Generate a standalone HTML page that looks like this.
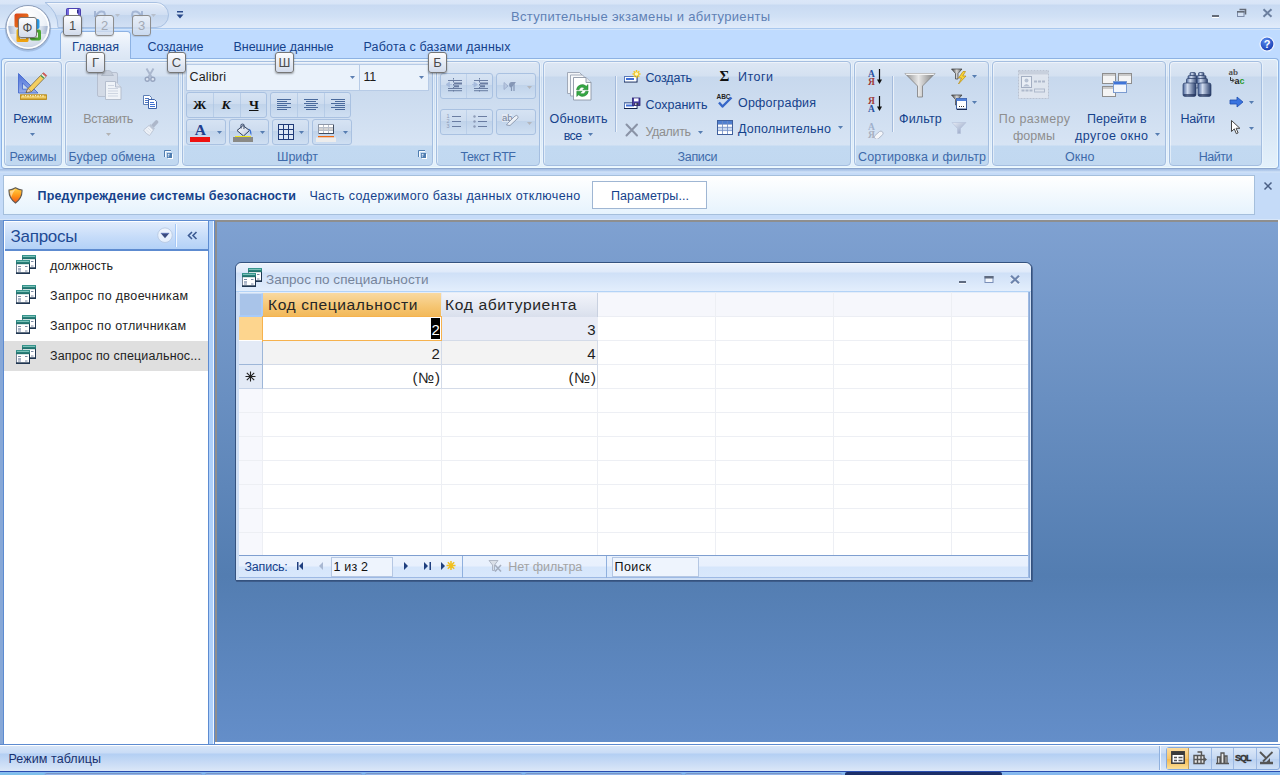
<!DOCTYPE html>
<html lang="ru"><head><meta charset="utf-8"><title>Вступительные экзамены и абитуриенты</title>
<style>
html,body{margin:0;padding:0;}
body{width:1280px;height:775px;overflow:hidden;position:relative;background:#bfdbff;font-family:"Liberation Sans",sans-serif;font-size:12.5px;color:#15428b;}
div,span,svg{position:absolute;box-sizing:border-box;}
.t{white-space:nowrap;}
.grp{top:61px;height:105px;border:1px solid #a4bee0;border-radius:4px;background:linear-gradient(#dde7f4 0,#d4e1f1 14px,#c7d8ed 15px,#d7e4f4 83px,#c2d9f1 84px,#c1d8f0 100%);box-shadow:inset 1px 1px 0 rgba(255,255,255,.5), 0 0 0 1px rgba(240,248,255,.6);}
.kt{width:19px;height:21px;border:1px solid #767676;border-radius:3px;background:linear-gradient(#fdfdfe,#d2dbeb);box-shadow:0 1px 2px rgba(0,0,0,.35);font-size:13px;color:#4b4b4b;text-align:center;line-height:19px;}
.kt.dis{border-color:#8e8e8e;background:linear-gradient(rgba(240,244,250,.8),rgba(205,217,235,.8));color:#a3a9b5;box-shadow:0 1px 1px rgba(0,0,0,.12)}
.bg{border:1px solid #a9c1e1;border-radius:3px;background:linear-gradient(#d6e3f3 0,#cddcef 45%,#c0d3ea 46%,#cfdff2 100%);}
.sep{width:1px;background:#a9c1e1;}
.gl{white-space:nowrap;color:#3e6aaa;}
</style></head><body>
<svg style="left:0;top:0" width="0" height="0"><defs><linearGradient id="qh" x1="0" y1="0" x2="0" y2="1"><stop offset="0" stop-color="#3a9a92"/><stop offset="1" stop-color="#1d6b67"/></linearGradient></defs></svg>
<div style="left:0;top:0;width:1280px;height:30px;background:linear-gradient(#dbe7f8 0,#d8e5f7 4px,#c8daf2 5px,#d0e0f5 16px,#e0ebfa 27.500px,#a9c8ee 28px,#a9c8ee 29px,#d3e5fb 29px)"></div><svg style="left:40px;top:0" width="135" height="30" viewBox="0 0 135 30"><defs><linearGradient id="qp" x1="0" y1="0" x2="0" y2="1"><stop offset="0" stop-color="#e4ecf8"/><stop offset=".5" stop-color="#d0def2"/><stop offset=".52" stop-color="#c4d6ee"/><stop offset="1" stop-color="#d2e0f4"/></linearGradient></defs><path d="M5 2.500 H116 a12.500 12.500 0 0 1 0 25 H18 A30 30 0 0 0 5 2.500Z" fill="url(#qp)" stroke="#a9c1e2" stroke-width="1"/><path d="M8 3.500 H116 a11.500 11.500 0 0 1 8 3.300" fill="none" stroke="#f2f6fc" stroke-width="1"/></svg><span class="t" style="left:511px;top:8px;font-size:13px;color:#5f81b5;line-height:17px;letter-spacing:0.32px;">Вступительные экзамены и абитуриенты</span><div style="left:1212px;top:15px;width:7px;height:2px;background:#646b78;box-shadow:0 1px 0 #fff"></div><svg style="left:1236px;top:8px" width="12" height="10" viewBox="0 0 12 10"><path d="M3.5 1.5h6v5" fill="none" stroke="#636a76" stroke-width="1.6"/><rect x="1.5" y="3.5" width="6.5" height="5" fill="#d5e2f4" stroke="#7d8caa" stroke-width="1"/><rect x="1" y="3" width="7.5" height="1.6" fill="#636a76"/></svg><svg style="left:1262px;top:8px" width="12" height="10" viewBox="0 0 12 10"><path d="M1.5 1.2 L9.5 8.8 M9.5 1.2 L1.5 8.8" stroke="#6b7f9f" stroke-width="2"/></svg><div style="left:60px;top:31px;width:71px;height:28px;border:1px solid #8db2e3;border-bottom:none;border-radius:4px 4px 0 0;background:linear-gradient(#f4f8fd,#e3ecf8 60%,#dbe6f4);"></div><span class="t" style="left:72px;top:39px;font-size:12.5px;color:#15428b;line-height:16px;letter-spacing:-0.1px;">Главная</span><span class="t" style="left:147.5px;top:39px;font-size:12.5px;color:#15428b;line-height:16px;letter-spacing:-0.06px;">Создание</span><span class="t" style="left:233.5px;top:39px;font-size:12.5px;color:#15428b;line-height:16px;letter-spacing:-0.04px;">Внешние данные</span><span class="t" style="left:363.5px;top:39px;font-size:12.5px;color:#15428b;line-height:16px;letter-spacing:0.18px;">Работа с базами данных</span><svg style="left:1259px;top:36px" width="16" height="16" viewBox="0 0 16 16"><defs><radialGradient id="hg" cx=".4" cy=".3" r=".8"><stop offset="0" stop-color="#5b8df0"/><stop offset="1" stop-color="#0d2fa8"/></radialGradient></defs><circle cx="8" cy="8" r="7" fill="url(#hg)" stroke="#f4f8ff" stroke-width="1.2"/><text x="8" y="12" font-size="11" font-weight="bold" fill="#fff" text-anchor="middle" font-family="Liberation Sans, sans-serif">?</text></svg><div style="left:1px;top:58px;width:1278px;height:111px;border:1px solid #8db2e3;border-bottom-color:#8da6cd;border-radius:4px;background:linear-gradient(#dee9f6 0,#d7e3f2 17px,#c8d9ee 18px,#e4f1fb 100%);box-shadow:inset 0 0 0 1px rgba(240,252,255,.75)"></div><div style="left:61px;top:58px;width:69px;height:3px;background:#dbe6f4"></div><div style="left:0;top:169px;width:1280px;height:6px;background:linear-gradient(#a3bde3 0,#b9d0f0 2px,#d3e4f8 3px,#c5dbf8 4px)"></div><div class="grp" style="left:4px;width:58px"></div><div class="grp" style="left:65px;width:114px"></div><div class="grp" style="left:182px;width:251px"></div><div class="grp" style="left:436px;width:104px"></div><div class="grp" style="left:543px;width:308px"></div><div class="grp" style="left:854px;width:135px"></div><div class="grp" style="left:992px;width:174px"></div><div class="grp" style="left:1169px;width:93px"></div><span class="t" style="left:9.5px;top:149px;font-size:12.5px;color:#3e6aaa;line-height:17px;letter-spacing:-0.11px;">Режимы</span><span class="t" style="left:68.5px;top:149px;font-size:12.5px;color:#3e6aaa;line-height:17px;letter-spacing:0.14px;">Буфер обмена</span><svg style="left:164px;top:150px" width="10" height="10" viewBox="0 0 10 10"><path d="M.5 7V.5H7" fill="none" stroke="#4f7db0" stroke-width="1"/><path d="M1.500 7V1.500H7" fill="none" stroke="#fff" stroke-width="1" opacity=".85"/><rect x="4" y="4" width="5" height="5" fill="#fff"/><rect x="3" y="3" width="5" height="5" fill="#4f7db0"/><rect x="3.800" y="3.800" width="1.700" height="1.700" fill="#dbe7f5"/><rect x="3.800" y="5.500" width="1.200" height="1.700" fill="#a9c1de"/></svg><span class="t" style="left:277px;top:149px;font-size:12.5px;color:#3e6aaa;line-height:17px;letter-spacing:-0.04px;">Шрифт</span><svg style="left:418px;top:150px" width="10" height="10" viewBox="0 0 10 10"><path d="M.5 7V.5H7" fill="none" stroke="#4f7db0" stroke-width="1"/><path d="M1.500 7V1.500H7" fill="none" stroke="#fff" stroke-width="1" opacity=".85"/><rect x="4" y="4" width="5" height="5" fill="#fff"/><rect x="3" y="3" width="5" height="5" fill="#4f7db0"/><rect x="3.800" y="3.800" width="1.700" height="1.700" fill="#dbe7f5"/><rect x="3.800" y="5.500" width="1.200" height="1.700" fill="#a9c1de"/></svg><span class="t" style="left:460.5px;top:149px;font-size:12.5px;color:#3e6aaa;line-height:17px;letter-spacing:-0.44px;">Текст RTF</span><span class="t" style="left:677.5px;top:149px;font-size:12.5px;color:#3e6aaa;line-height:17px;letter-spacing:-0.3px;">Записи</span><span class="t" style="left:858px;top:149px;font-size:12.5px;color:#3e6aaa;line-height:17px;letter-spacing:0.15px;">Сортировка и фильтр</span><span class="t" style="left:1065px;top:149px;font-size:12.5px;color:#3e6aaa;line-height:17px;letter-spacing:0.15px;">Окно</span><span class="t" style="left:1198.8px;top:149px;font-size:12.5px;color:#3e6aaa;line-height:17px;letter-spacing:-0.49px;">Найти</span><svg style="left:17px;top:70px" width="32" height="32" viewBox="0 0 32 32">
<defs><linearGradient id="tri" x1="0" y1="0" x2="0" y2="1"><stop offset="0" stop-color="#3f65d8"/><stop offset="1" stop-color="#8fa8e8"/></linearGradient>
<linearGradient id="rul" x1="0" y1="0" x2="0" y2="1"><stop offset="0" stop-color="#c8941c"/><stop offset=".5" stop-color="#f6d878"/><stop offset="1" stop-color="#c8941c"/></linearGradient></defs>
<path d="M1.5 3.5 L1.5 23 L21 23 Z M5.5 13 L5.5 19.2 L12 19.2 Z" fill="url(#tri)" fill-rule="evenodd" stroke="#2f55c8" stroke-width=".8" opacity=".9"/>
<path d="M9 22.5 L11 18.5 L25.5 3.5 L29 6.5 L14.5 21.5 Z" fill="#f5cf5e" stroke="#6b5a3a" stroke-width=".7"/>
<path d="M9 22.5 L11 18.5 L14.5 21.5 Z" fill="#f3d9b8" stroke="#6b5a3a" stroke-width=".5"/><path d="M9 22.5l1-.4-.6-.6z" fill="#222"/>
<path d="M23.3 5.8 L26.7 8.8 L29 6.5 L25.5 3.5Z" fill="#e8e4da"/><path d="M23.3 5.8l3.4 3 .8-.8-3.4-3z" fill="#2e8a3c"/><path d="M26.5 2.6 L29.8 5.6 L29 6.5 L25.6 3.5Z" fill="#e05a5a" stroke="#a33" stroke-width=".4"/>
<rect x="3.5" y="24.8" width="26" height="4.6" fill="url(#rul)" stroke="#b8860b" stroke-width=".8"/>
<path d="M6 25v2M8.5 25v1.2M11 25v2M13.500 25v1.200M16 25v2M18.500 25v1.200M21 25v2M23.500 25v1.200M26 25v2" stroke="#fff8d8" stroke-width=".9"/>
</svg><span class="t" style="left:13.3px;top:111px;font-size:12.5px;color:#15428b;line-height:17px;letter-spacing:0.04px;">Режим</span><svg style="left:30.0px;top:132.5px" width="5" height="3" viewBox="0 0 5 3"><path d="M0 0h5 l-2.5 3 z" fill="#567db1"/></svg><svg style="left:96px;top:69px" width="28" height="32" viewBox="0 0 28 32" opacity=".9">
<rect x="1.500" y="3.500" width="20" height="24" rx="1.500" fill="#d3dae6" stroke="#b4bdcd"/>
<path d="M7 4.5 q0-3 4.500-3 q4.500 0 4.500 3 l1.500 2 h-12z" fill="#c2c9d6" stroke="#a9b2c2" stroke-width=".8"/>
<path d="M9.500 12.500h10l5.500 5.500v12.500h-15.500z" fill="#f4f6fa" stroke="#b3bccb"/>
<path d="M19.500 12.500v5.500h5.500" fill="#e2e6ee" stroke="#b3bccb"/>
<path d="M12 19.500h10M12 22h10M12 24.500h10M12 27h10M12 16.500h6" stroke="#cfd5e0" stroke-width="1"/>
</svg><span class="t" style="left:83.3px;top:111px;font-size:12.5px;color:#8e8e8e;line-height:17px;letter-spacing:-0.43px;">Вставить</span><svg style="left:105.5px;top:132.5px" width="5" height="3" viewBox="0 0 5 3"><path d="M0 0h5 l-2.5 3 z" fill="#b3b3b3"/></svg><svg style="left:144px;top:68px" width="12" height="15" viewBox="0 0 12 15" opacity=".85">
<path d="M2.500 .5 L7.800 9.500 M9.500 .5 L4.200 9.500" stroke="#a3b0c8" stroke-width="1.900" fill="none"/>
<circle cx="3.200" cy="11.300" r="2" fill="#dfe6f2" stroke="#8e9cb8" stroke-width="1.400"/><circle cx="8.800" cy="11.300" r="2" fill="#dfe6f2" stroke="#8e9cb8" stroke-width="1.400"/></svg><svg style="left:142px;top:94px" width="16" height="16" viewBox="0 0 16 16">
<path d="M1.500 1.500h6l2 2v7h-8z" fill="#fff" stroke="#5d7fb5"/><path d="M3 4.500h4M3 6.500h5M3 8.500h5" stroke="#4e77c3" stroke-width="1"/>
<path d="M6.500 5.500h6l2 2v7h-8z" fill="#fff" stroke="#3e63a8"/><path d="M8 8.500h4M8 10.500h5M8 12.500h5" stroke="#3d6fd0" stroke-width="1"/></svg><svg style="left:142px;top:120px" width="17" height="17" viewBox="0 0 17 17" opacity=".9">
<path d="M14.500 2 L11 5.800" stroke="#a9b3c6" stroke-width="3.600" stroke-linecap="round"/>
<path d="M8.500 4 L13 8.500 L11.500 10 L7 5.500Z" fill="#b9c2d3"/>
<path d="M7 5.500 L11.500 10 L7.500 15.500 Q4 14 1.500 10 Z" fill="#f1f4f9" stroke="#b4bdcd" stroke-width=".8"/>
<path d="M4 9.500l4 4M6 8l3.500 3.500" stroke="#d5dbe6" stroke-width=".8"/></svg><div style="left:186px;top:64px;width:174px;height:27px;background:#eaf2fb;border:1px solid #b7cbe6;border-right-color:#c5d6ec"></div><div style="left:359px;top:64px;width:70px;height:27px;background:#eaf2fb;border:1px solid #b7cbe6"></div><span class="t" style="left:189.5px;top:69px;font-size:12.5px;color:#1c1c1c;line-height:17px;letter-spacing:0.18px;">Calibri</span><span class="t" style="left:363.6px;top:69px;font-size:12.5px;color:#1c1c1c;line-height:17px;letter-spacing:-0.48px;">11</span><svg style="left:350.0px;top:76.0px" width="5" height="3" viewBox="0 0 5 3"><path d="M0 0h5 l-2.5 3 z" fill="#5c7fb2"/></svg><svg style="left:419.0px;top:76.0px" width="5" height="3" viewBox="0 0 5 3"><path d="M0 0h5 l-2.5 3 z" fill="#5c7fb2"/></svg><div class="bg" style="left:186px;top:92px;width:81px;height:26px"></div><div class="sep" style="left:213px;top:93px;height:24px;opacity:.6"></div><div class="sep" style="left:240px;top:93px;height:24px;opacity:.6"></div><span class="t" style="left:193px;top:96px;font-size:13.5px;color:#111;line-height:18px;letter-spacing:-0.36px;font-weight:bold;font-family:'Liberation Serif', serif;">Ж</span><span class="t" style="left:221.5px;top:96px;font-size:13.5px;color:#111;line-height:18px;letter-spacing:2.34px;font-weight:bold;font-style:italic;font-family:'Liberation Serif', serif;">К</span><span class="t" style="left:249px;top:96px;font-size:13.5px;color:#111;line-height:18px;letter-spacing:-0.42px;font-weight:bold;font-family:'Liberation Serif', serif;text-decoration:underline;">Ч</span><div class="bg" style="left:270px;top:92px;width:81px;height:26px"></div><div class="sep" style="left:297px;top:93px;height:24px;opacity:.6"></div><div class="sep" style="left:324px;top:93px;height:24px;opacity:.6"></div><svg style="left:276px;top:98px" width="16" height="14" viewBox="0 0 16 14"><rect x="1" y="1" width="14" height="1" fill="#4a6a9c"/><rect x="1" y="3" width="10" height="1" fill="#4a6a9c"/><rect x="1" y="5" width="14" height="1" fill="#4a6a9c"/><rect x="1" y="7" width="10" height="1" fill="#4a6a9c"/><rect x="1" y="9" width="14" height="1" fill="#4a6a9c"/><rect x="1" y="11" width="10" height="1" fill="#4a6a9c"/></svg><svg style="left:303px;top:98px" width="16" height="14" viewBox="0 0 16 14"><rect x="1.0" y="1" width="14" height="1" fill="#4a6a9c"/><rect x="3.0" y="3" width="10" height="1" fill="#4a6a9c"/><rect x="1.0" y="5" width="14" height="1" fill="#4a6a9c"/><rect x="3.0" y="7" width="10" height="1" fill="#4a6a9c"/><rect x="1.0" y="9" width="14" height="1" fill="#4a6a9c"/><rect x="3.0" y="11" width="10" height="1" fill="#4a6a9c"/></svg><svg style="left:330px;top:98px" width="16" height="14" viewBox="0 0 16 14"><rect x="1" y="1" width="14" height="1" fill="#4a6a9c"/><rect x="5" y="3" width="10" height="1" fill="#4a6a9c"/><rect x="1" y="5" width="14" height="1" fill="#4a6a9c"/><rect x="5" y="7" width="10" height="1" fill="#4a6a9c"/><rect x="1" y="9" width="14" height="1" fill="#4a6a9c"/><rect x="5" y="11" width="10" height="1" fill="#4a6a9c"/></svg><div class="bg" style="left:186px;top:119px;width:40px;height:26px"></div><span class="t" style="left:194.8px;top:120.5px;font-size:15.5px;color:#1f3f8f;line-height:18px;letter-spacing:1.8px;font-weight:bold;font-family:'Liberation Serif', serif;">A</span><div style="left:190px;top:137px;width:20px;height:5px;background:#ee1111"></div><svg style="left:216.5px;top:131.0px" width="5" height="3" viewBox="0 0 5 3"><path d="M0 0h5 l-2.5 3 z" fill="#567db1"/></svg><div class="bg" style="left:229px;top:119px;width:40px;height:26px"></div><svg style="left:232px;top:122px" width="22" height="16" viewBox="0 0 22 16">
<defs><linearGradient id="bk" x1="0" y1="0" x2="1" y2="1"><stop offset="0" stop-color="#ffffff"/><stop offset="1" stop-color="#b9c6dc"/></linearGradient></defs>
<path d="M5 8.500 L11 3.500 L17.500 8.500 L11.500 14 Z" fill="url(#bk)" stroke="#2f3f5c" stroke-width="1"/>
<path d="M9.300 6.500 Q8 2 10.500 2 Q13 2 11.800 7" fill="none" stroke="#4a5a78" stroke-width="1.100"/>
<path d="M16.500 6.500 Q20 7 19.300 13.500 Q17.500 11.500 17.800 9 Z" fill="#3a6fd0"/>
</svg><div style="left:233px;top:137px;width:20px;height:5px;background:#8a8a86"></div><div style="left:235px;top:136px;width:16px;height:1px;background:#f0e818"></div><svg style="left:260.0px;top:131.0px" width="5" height="3" viewBox="0 0 5 3"><path d="M0 0h5 l-2.5 3 z" fill="#567db1"/></svg><div class="bg" style="left:272px;top:119px;width:37px;height:26px"></div><svg style="left:278px;top:124px" width="16" height="16" viewBox="0 0 16 16"><rect x="0" y="0" width="16" height="16" fill="#dde7f5"/><path d="M.5 0v16M5.500 0v16M10.500 0v16M15.500 0v16M0 .5h16M0 5.500h16M0 10.500h16M0 15.500h16" stroke="#1f3a78" stroke-width="1"/></svg><svg style="left:299.0px;top:131.0px" width="5" height="3" viewBox="0 0 5 3"><path d="M0 0h5 l-2.5 3 z" fill="#567db1"/></svg><div class="bg" style="left:312px;top:119px;width:40px;height:26px"></div><svg style="left:316px;top:124px" width="20" height="18" viewBox="0 0 20 18">
<rect x="2" y="0" width="16" height="10" fill="#8f98a8"/><rect x="3" y="1" width="15" height="9" fill="#3f4c60"/><rect x="3" y="1" width="14" height="8" fill="#b9bfca"/>
<g fill="#fff"><rect x="3" y="1" width="4" height="2"/><rect x="8" y="1" width="4" height="2"/><rect x="13" y="1" width="4" height="2"/><rect x="3" y="7" width="4" height="2"/><rect x="8" y="7" width="4" height="2"/><rect x="13" y="7" width="4" height="2"/></g>
<g fill="#d2d2d2"><rect x="3" y="4" width="4" height="2"/><rect x="8" y="4" width="4" height="2"/><rect x="13" y="4" width="4" height="2"/></g>
<rect x="2" y="12" width="16" height="1.500" fill="#f26a10"/><rect x="0" y="13.500" width="20" height="4.500" fill="#ececec"/></svg><svg style="left:343.0px;top:131.0px" width="5" height="3" viewBox="0 0 5 3"><path d="M0 0h5 l-2.5 3 z" fill="#567db1"/></svg><div class="bg" style="left:440px;top:73px;width:53px;height:26px"></div><div class="sep" style="left:466px;top:74px;height:24px;opacity:.5"></div><div class="bg" style="left:496px;top:73px;width:40px;height:26px"></div><div class="bg" style="left:440px;top:109px;width:53px;height:26px"></div><div class="sep" style="left:466px;top:110px;height:24px;opacity:.5"></div><div class="bg" style="left:496px;top:109px;width:40px;height:26px"></div><svg style="left:446px;top:77px;opacity:.8" width="17" height="17" viewBox="0 0 17 17"><g fill="#52668f"><rect x="2" y="3" width="14" height="1"/><rect x="8" y="5.500" width="8" height="2"/><rect x="8" y="8.300" width="5" height="2"/><rect x="2" y="11" width="14" height="1"/><rect x="2" y="13.200" width="14" height="1"/></g><path d="M7.500 1v15" stroke="#52668f" stroke-width="1" stroke-dasharray="1.500 1.500"/><path d="M0 7.500 L3.500 5v5z M3 7.500h3" fill="#9db3d8" stroke="#9db3d8" stroke-width=".8"/></svg><svg style="left:472px;top:77px;opacity:.8" width="17" height="17" viewBox="0 0 17 17"><g fill="#52668f"><rect x="2" y="3" width="14" height="1"/><rect x="8" y="5.500" width="8" height="2"/><rect x="8" y="8.300" width="5" height="2"/><rect x="2" y="11" width="14" height="1"/><rect x="2" y="13.200" width="14" height="1"/></g><path d="M7.500 1v15" stroke="#52668f" stroke-width="1" stroke-dasharray="1.500 1.500"/><path d="M5.500 7.500 L2 5v5z M0 7.500h3" fill="#9db3d8" stroke="#9db3d8" stroke-width=".8"/></svg><svg style="left:503px;top:81px;opacity:.75" width="15" height="11" viewBox="0 0 15 11"><path d="M1 1.500v7l4-3.500z" fill="#b5c3dc" stroke="#8a9cc0" stroke-width=".8"/><path d="M8.500 1.500v8.500M11 1.500v8.500M12.500 1.500H9a2.300 2.300 0 0 0 0 4.600" fill="#6f80a3" stroke="#6f80a3" stroke-width="1.200"/></svg><svg style="left:527.0px;top:85.5px" width="5" height="3" viewBox="0 0 5 3"><path d="M0 0h5 l-2.5 3 z" fill="#b3b6bd"/></svg><svg style="left:445px;top:113px;opacity:.8" width="18" height="17" viewBox="0 0 18 17"><rect x="7" y="3" width="9" height="1" fill="#52668f"/><text x="1.500" y="5.3" font-size="5.500" fill="#7f8dab" font-family="Liberation Sans, sans-serif">1</text><rect x="7" y="8" width="9" height="1" fill="#52668f"/><text x="1.500" y="10.3" font-size="5.500" fill="#7f8dab" font-family="Liberation Sans, sans-serif">2</text><rect x="7" y="13" width="9" height="1" fill="#52668f"/><text x="1.500" y="15.3" font-size="5.500" fill="#7f8dab" font-family="Liberation Sans, sans-serif">3</text></svg><svg style="left:471px;top:113px;opacity:.8" width="18" height="17" viewBox="0 0 18 17"><rect x="7" y="3" width="9" height="1" fill="#52668f"/><circle cx="3.500" cy="3.5" r="1.200" fill="#7f8dab"/><rect x="7" y="8" width="9" height="1" fill="#52668f"/><circle cx="3.500" cy="8.5" r="1.200" fill="#7f8dab"/><rect x="7" y="13" width="9" height="1" fill="#52668f"/><circle cx="3.500" cy="13.5" r="1.200" fill="#7f8dab"/></svg><svg style="left:501px;top:112px;opacity:.8" width="20" height="16" viewBox="0 0 20 16"><rect x="1" y="2" width="10" height="8" fill="#e6ecf6"/><text x="1" y="9" font-size="9.500" fill="#5f6c88" font-family="Liberation Sans, sans-serif">ab</text><path d="M6.500 11.500 L14 4 Q16 2.500 17 4.500 Q17.500 6 16 7 L9 13.500 L5.500 13z" fill="#f4f6fa" stroke="#7b879c" stroke-width=".9"/></svg><svg style="left:527.0px;top:121.5px" width="5" height="3" viewBox="0 0 5 3"><path d="M0 0h5 l-2.5 3 z" fill="#b3b6bd"/></svg><svg style="left:565px;top:70px" width="28" height="32" viewBox="0 0 28 32">
<path d="M2.500 2.500h12l4 4v17h-16z" fill="#f3f5f8" stroke="#9aa3b2" stroke-width=".9"/>
<path d="M5.500 5h12l4 4v17h-16z" fill="#f8f9fb" stroke="#9aa3b2" stroke-width=".9"/>
<path d="M8.500 7.500h12.500l5 5v17.500h-17.500z" fill="#fff" stroke="#8c95a5" stroke-width=".9"/>
<path d="M21 7.500v5h5" fill="#e3e7ee" stroke="#8c95a5" stroke-width=".9"/>
<path d="M11.500 19.800 a5.800 5.800 0 0 1 9.800-3.600 l1.700-1.700 v5.300 h-5.300 l1.800-1.800 a3.300 3.300 0 0 0-5.400 1.800z M23.300 21.200 a5.800 5.800 0 0 1-9.800 3.600 l-1.700 1.700 v-5.300 h5.300 l-1.800 1.800 a3.300 3.300 0 0 0 5.400-1.800z" fill="#35a843" stroke="#1f7a2c" stroke-width=".5"/>
</svg><span class="t" style="left:549.5px;top:111px;font-size:12.5px;color:#15428b;line-height:17px;letter-spacing:0.2px;">Обновить</span><span class="t" style="left:563.7px;top:127.5px;font-size:12.5px;color:#15428b;line-height:17px;letter-spacing:-0.6px;">все</span><svg style="left:588.0px;top:133.0px" width="5" height="3" viewBox="0 0 5 3"><path d="M0 0h5 l-2.5 3 z" fill="#567db1"/></svg><div style="left:615px;top:76px;width:1px;height:56px;background:#a4bbdc"></div><div style="left:616px;top:76px;width:1px;height:56px;background:rgba(255,255,255,.6)"></div><svg style="left:624px;top:70px" width="17" height="13" viewBox="0 0 17 13"><rect x="0" y="6" width="13.500" height="6.500" fill="#10204a"/><rect x="0" y="6" width="12.500" height="5.500" fill="#5a7ab8"/><rect x="1" y="7" width="11.500" height="4.500" fill="#fff"/><rect x="2" y="8" width="8" height="2" fill="#3f6fd8"/><path d="M12.500 0v8M8.500 4h8M9.700 1.200l5.600 5.600M15.300 1.200l-5.600 5.600" stroke="#f4c820" stroke-width="1.500"/><circle cx="12.500" cy="4" r="1.700" fill="#fff8c0"/></svg><span class="t" style="left:645.5px;top:70px;font-size:12.5px;color:#15428b;line-height:17px;letter-spacing:-0.17px;">Создать</span><svg style="left:624px;top:97px" width="17" height="13" viewBox="0 0 17 13"><rect x="0" y="5.5" width="13.500" height="6.500" fill="#10204a"/><rect x="0" y="5.5" width="12.500" height="5.500" fill="#5a7ab8"/><rect x="1" y="6.5" width="11.500" height="4.500" fill="#fff"/><rect x="2" y="7.5" width="8" height="2" fill="#3f6fd8"/><rect x="8.500" y="1" width="7.500" height="7.500" fill="#4a3fa8" stroke="#2a2470" stroke-width=".8"/><rect x="10" y="1.400" width="4.500" height="3" fill="#fff"/><rect x="10.300" y="5.800" width="4" height="2.400" fill="#3a3a4a"/><rect x="11" y="6.300" width="1.500" height="1.600" fill="#d8d8e8"/></svg><span class="t" style="left:645.5px;top:96.5px;font-size:12.5px;color:#15428b;line-height:17px;letter-spacing:-0.02px;">Сохранить</span><svg style="left:625px;top:123px" width="14" height="14" viewBox="0 0 14 14"><path d="M1.500 1.500 L12 12.500 M12 1.500 L1.500 12.500" stroke="#8a93a6" stroke-width="2" stroke-linecap="round"/></svg><span class="t" style="left:645.5px;top:123.5px;font-size:12.5px;color:#8e8e8e;line-height:17px;letter-spacing:-0.37px;">Удалить</span><svg style="left:697.5px;top:130.5px" width="5" height="3" viewBox="0 0 5 3"><path d="M0 0h5 l-2.5 3 z" fill="#567db1"/></svg><span class="t" style="left:719.5px;top:67px;font-size:15px;color:#111;line-height:18px;letter-spacing:0.19px;font-weight:bold;font-family:'Liberation Serif', serif;">Σ</span><span class="t" style="left:738px;top:69px;font-size:12.5px;color:#15428b;line-height:17px;letter-spacing:0.48px;">Итоги</span><svg style="left:716px;top:93px" width="18" height="16" viewBox="0 0 18 16">
<text x="0.500" y="6" font-size="6.500" font-weight="bold" fill="#222" font-family="Liberation Sans, sans-serif" textLength="14">ABC</text>
<path d="M3 9.500 L6.500 13.500 L15.500 4.500" fill="none" stroke="#3566c8" stroke-width="2.400" stroke-linejoin="round"/></svg><span class="t" style="left:738px;top:94.5px;font-size:12.5px;color:#15428b;line-height:17px;letter-spacing:0.18px;">Орфография</span><svg style="left:716px;top:119px" width="18" height="17" viewBox="0 0 18 17">
<rect x="1.500" y="1.500" width="15" height="14" fill="#fff" stroke="#3f5f9c" stroke-width="1"/><rect x="2" y="2" width="14" height="3" fill="#4f7fd0"/>
<rect x="2" y="8.300" width="14" height="3" fill="#c9d8f0"/><path d="M6.500 2v13M11.500 2v13M2 5.300h14M2 8.300h14M2 11.600h14" stroke="#6d8cc4" stroke-width=".8"/></svg><span class="t" style="left:738px;top:121px;font-size:12.5px;color:#15428b;line-height:17px;letter-spacing:0.25px;">Дополнительно</span><svg style="left:838.0px;top:126.0px" width="5" height="3" viewBox="0 0 5 3"><path d="M0 0h5 l-2.5 3 z" fill="#567db1"/></svg><svg style="left:867px;top:69px" width="18" height="17" viewBox="0 0 18 17"><text x="1" y="7.500" font-size="9.500" font-weight="bold" fill="#2a4f9e" font-family="Liberation Serif, serif">А</text><text x="1" y="15.800" font-size="9.500" font-weight="bold" fill="#9e3a3a" font-family="Liberation Serif, serif">Я</text><path d="M12.500 0v12" stroke="#111" stroke-width="1.200"/><path d="M10 10.500h5l-2.500 4.500z" fill="#111"/></svg><svg style="left:867px;top:96px" width="18" height="17" viewBox="0 0 18 17"><text x="1" y="7.500" font-size="9.500" font-weight="bold" fill="#9e3a3a" font-family="Liberation Serif, serif">Я</text><text x="1" y="15.800" font-size="9.500" font-weight="bold" fill="#2a4f9e" font-family="Liberation Serif, serif">А</text><path d="M12.500 0v12" stroke="#111" stroke-width="1.200"/><path d="M10 10.500h5l-2.500 4.500z" fill="#111"/></svg><svg style="left:867px;top:122px" width="18" height="17" viewBox="0 0 18 17"><text x="1" y="7.500" font-size="9.500" font-weight="bold" fill="#9fb0cc" font-family="Liberation Serif, serif">А</text><text x="1" y="15.800" font-size="9.500" font-weight="bold" fill="#a8b0c0" font-family="Liberation Serif, serif">Я</text><path d="M8 13.500 L12.500 9.500 a2.300 2.300 0 0 1 3.200 3.200 L11.500 16.500 a2.300 2.300 0 0 1 -3.500 -3z" fill="#f4f6fa" stroke="#a9b3c6" stroke-width=".9"/></svg><div style="left:892px;top:76px;width:1px;height:56px;background:#a4bbdc"></div><div style="left:893px;top:76px;width:1px;height:56px;background:rgba(255,255,255,.6)"></div><svg style="left:904px;top:71px" width="32" height="28" viewBox="0 0 32 28">
<defs><linearGradient id="fn" x1="0" y1="0" x2="1" y2="0"><stop offset="0" stop-color="#8d8d8d"/><stop offset=".45" stop-color="#e8e8e8"/><stop offset="1" stop-color="#7a7a7a"/></linearGradient></defs>
<path d="M1 2.500 h30 L18.500 15 V26 h-5 V15 Z" fill="url(#fn)" stroke="#7d7d7d" stroke-width=".8"/>
<path d="M1 2.500h30l-1.500 1.500h-27z" fill="#f4f4f4"/></svg><span class="t" style="left:899px;top:111px;font-size:12.5px;color:#15428b;line-height:17px;letter-spacing:0.14px;">Фильтр</span><svg style="left:951px;top:68px" width="17" height="17" viewBox="0 0 17 17"><defs><linearGradient id="sf" x1="0" y1="0" x2="1" y2="0"><stop offset="0" stop-color="#3a3a3a"/><stop offset=".5" stop-color="#d8d8d8"/><stop offset="1" stop-color="#555"/></linearGradient></defs><path transform="translate(0.5,1) scale(1.0)" d="M0 0h10.500L6.500 4.500V10H4V4.500Z" fill="url(#sf)" stroke="#3c3c3c" stroke-width=".7" opacity="1"/><path d="M12 3.500 L7.500 10 h3 L7.500 16 L15 8 h-3.300 L14.500 3.500z" fill="#f7d438" stroke="#b98a10" stroke-width=".7"/></svg><svg style="left:971.5px;top:74.5px" width="5" height="3" viewBox="0 0 5 3"><path d="M0 0h5 l-2.5 3 z" fill="#567db1"/></svg><svg style="left:951px;top:94px" width="17" height="17" viewBox="0 0 17 17"><path transform="translate(0.5,1) scale(1.0)" d="M0 0h10.500L6.500 4.500V10H4V4.500Z" fill="url(#sf)" stroke="#3c3c3c" stroke-width=".7" opacity="1"/><rect x="5.500" y="4.500" width="10" height="10.500" fill="#fff" stroke="#3f5f9c" stroke-width="1"/><rect x="5.500" y="4.500" width="10" height="2.500" fill="#4f7fd8"/><path d="M8 12.500h1M10 12.500h1M12 12.500h1" stroke="#333" stroke-width="1.200"/><rect x="6" y="15" width="10" height="1" fill="#1a2a50"/></svg><svg style="left:971.5px;top:101.0px" width="5" height="3" viewBox="0 0 5 3"><path d="M0 0h5 l-2.5 3 z" fill="#567db1"/></svg><svg style="left:951px;top:121px" width="16" height="14" viewBox="0 0 16 14"><defs><linearGradient id="df" x1="0" y1="0" x2="1" y2="1"><stop offset="0" stop-color="#e8edf6"/><stop offset="1" stop-color="#8b9cc0"/></linearGradient></defs><path d="M1 1.500h14L9.500 7.500V12.500H6.500V7.500Z" fill="url(#df)" stroke="#b4c0d8" stroke-width=".6"/></svg><svg style="left:1017px;top:69px" width="34" height="32" viewBox="0 0 34 32" opacity=".8">
<rect x="1.500" y="1.500" width="30" height="28" fill="#e4e8ef" stroke="#b5bccb" stroke-width="1" stroke-dasharray="2 1"/>
<rect x="2" y="2" width="29" height="3.500" fill="#c5ccd9"/>
<rect x="4.500" y="7.500" width="10" height="11" fill="#f2f4f8" stroke="#9aa4b8"/><circle cx="9.500" cy="11.500" r="2" fill="#b2bccd"/><path d="M6 17.500q3.500-5 7 0z" fill="#b2bccd"/>
<path d="M17 12.500h3M21 12.500h3M25 12.500h3" stroke="#a8b1c3" stroke-width="2"/>
<path d="M4.500 21.500h3M8.500 21.500h3M12.500 21.500h3" stroke="#a8b1c3" stroke-width="2"/><rect x="17.500" y="20" width="10" height="3" fill="none" stroke="#a8b1c3"/></svg><span class="t" style="left:998.8px;top:111px;font-size:12.5px;color:#8e8e8e;line-height:17px;letter-spacing:0.41px;">По размеру</span><span class="t" style="left:1013px;top:127.5px;font-size:12.5px;color:#8e8e8e;line-height:17px;letter-spacing:0.05px;">формы</span><svg style="left:1101px;top:72px" width="32" height="27" viewBox="0 0 32 27">
<g fill="#f4f4f4" stroke="#8e8e8e" stroke-width="1"><rect x="1.500" y="1.500" width="13" height="10"/><rect x="17.500" y="1.500" width="13" height="10"/><rect x="1.500" y="14.500" width="13" height="10"/></g>
<g fill="#c9c9c9"><rect x="2" y="2" width="12" height="2"/><rect x="18" y="2" width="12" height="2"/><rect x="2" y="15" width="12" height="2"/></g>
<rect x="12.500" y="9.500" width="13" height="11" fill="#f2f6fc" stroke="#7b9bd0" stroke-width="1"/><rect x="13" y="10" width="12" height="2.500" fill="#3f74d8"/></svg><span class="t" style="left:1087px;top:111px;font-size:12.5px;color:#15428b;line-height:17px;letter-spacing:0.01px;">Перейти в</span><span class="t" style="left:1075px;top:127.5px;font-size:12.5px;color:#15428b;line-height:17px;letter-spacing:0.47px;">другое окно</span><svg style="left:1154.5px;top:133.0px" width="5" height="3" viewBox="0 0 5 3"><path d="M0 0h5 l-2.5 3 z" fill="#567db1"/></svg><svg style="left:1182px;top:71px" width="30" height="27" viewBox="0 0 30 27">
<defs><linearGradient id="bn" x1="0" y1="0" x2="1" y2="0"><stop offset="0" stop-color="#4a659a"/><stop offset=".35" stop-color="#d0dcf0"/><stop offset="1" stop-color="#2a3f6c"/></linearGradient></defs>
<g fill="url(#bn)" stroke="#2b3f68" stroke-width=".7">
<rect x="12.500" y="12" width="5" height="5"/>
<rect x="8" y="1.500" width="5.500" height="3.500" rx="1.200"/><rect x="6" y="4.500" width="9" height="3.500" rx="1.200"/><rect x="4.500" y="7.500" width="10.500" height="5" rx="1.200"/><rect x="1" y="12" width="13" height="13.500" rx="2"/>
<rect x="16.500" y="1.500" width="5.500" height="3.500" rx="1.200"/><rect x="15" y="4.500" width="9" height="3.500" rx="1.200"/><rect x="15" y="7.500" width="10.500" height="5" rx="1.200"/><rect x="16" y="12" width="13" height="13.500" rx="2"/>
</g><rect x="1.500" y="23" width="12" height="2" fill="#1f3158" opacity=".7"/><rect x="16.500" y="23" width="12" height="2" fill="#1f3158" opacity=".7"/></svg><span class="t" style="left:1180.5px;top:111px;font-size:12.5px;color:#15428b;line-height:17px;letter-spacing:-0.29px;">Найти</span><svg style="left:1228px;top:68px" width="18" height="17" viewBox="0 0 18 17">
<text x="0.500" y="7" font-size="9" font-weight="bold" fill="#555" font-family="Liberation Serif, serif">ab</text>
<text x="6.500" y="15.500" font-size="9" font-weight="bold" fill="#222" font-family="Liberation Sans, sans-serif">a</text><text x="11.500" y="15.500" font-size="9" font-weight="bold" fill="#2a9a2a" font-family="Liberation Sans, sans-serif">c</text>
<path d="M2.500 9v3.500h3M4 10.500l2 2-2 2" fill="none" stroke="#333" stroke-width="1"/></svg><svg style="left:1229px;top:96px" width="15" height="12" viewBox="0 0 15 12"><path d="M1 4h7V1l6 5-6 5V8H1z" fill="#3a74e0" stroke="#1f4fb0" stroke-width=".8"/></svg><svg style="left:1248.5px;top:101.0px" width="5" height="3" viewBox="0 0 5 3"><path d="M0 0h5 l-2.5 3 z" fill="#567db1"/></svg><svg style="left:1230px;top:119px" width="12" height="17" viewBox="0 0 12 17"><path d="M1.500 1.500v11l2.800-2.600 2 4.800 1.800-.8-2-4.600h3.800z" fill="#fff" stroke="#444" stroke-width="1"/></svg><svg style="left:1248.5px;top:126.5px" width="5" height="3" viewBox="0 0 5 3"><path d="M0 0h5 l-2.5 3 z" fill="#567db1"/></svg><div style="left:0;top:175px;width:1280px;height:45px;background:#c5dbf8"></div><div style="left:3px;top:175px;width:1252px;height:40px;border:1px solid #a5bfdc;background:linear-gradient(#ffffff,#f5fafe 40%,#e6f3fd)"></div><svg style="left:8px;top:187px" width="15" height="17" viewBox="0 0 15 17">
<defs><linearGradient id="sh" x1="0" y1="0" x2="0" y2="1"><stop offset="0" stop-color="#ffd24a"/><stop offset=".5" stop-color="#ff9a1a"/><stop offset="1" stop-color="#f0521a"/></linearGradient></defs>
<path d="M7.500 .8 Q4 3 1 3 Q.5 11 7.500 16 Q14.500 11 14 3 Q11 3 7.500 .8Z" fill="url(#sh)" stroke="#5f5a55" stroke-width="1.100"/>
<path d="M7.500 2 Q4.500 3.800 2 4 Q2 8 3.500 10 Q5 5 7.500 2z" fill="#fff" opacity=".45"/></svg><span class="t" style="left:37.5px;top:187.5px;font-size:12.5px;color:#15428b;line-height:17px;letter-spacing:0.15px;font-weight:bold;">Предупреждение системы безопасности</span><span class="t" style="left:309.4px;top:187.5px;font-size:12.5px;color:#15428b;line-height:17px;letter-spacing:0.35px;">Часть содержимого базы данных отключено</span><div style="left:592px;top:181px;width:115px;height:28px;border:1px solid #9fb6d3;background:#fff"></div><span class="t" style="left:611px;top:187.5px;font-size:12.5px;color:#15428b;line-height:17px;letter-spacing:0.09px;">Параметры...</span><svg style="left:1263px;top:181px" width="10" height="10" viewBox="0 0 10 10"><path d="M1.500 1.500l7 7M8.500 1.500l-7 7" stroke="#4a5f85" stroke-width="1.500"/></svg><div style="left:0;top:219px;width:1280px;height:1px;background:#d6e5f8"></div><div style="left:0;top:220px;width:3px;height:524px;background:#87a8d8"></div><div style="left:3px;top:220px;width:206px;height:524px;background:#fff;border:1px solid #5d8bd0;border-bottom:none"></div><div style="left:5px;top:222px;width:203px;height:29px;background:linear-gradient(#e1ecfc,#c6dcf9 55%,#b3d1f7);border-bottom:2px solid #5d8bd0"></div><span class="t" style="left:10.5px;top:226px;font-size:17px;color:#1e4a94;line-height:22px;letter-spacing:-0.26px;">Запросы</span><svg style="left:157px;top:226.500px" width="16" height="16" viewBox="0 0 16 16"><circle cx="8" cy="8.200" r="7.300" fill="rgba(255,255,255,.6)" stroke="#b9c9e2" stroke-width=".9"/><path d="M3.800 6.300h8.400l-4.200 5z" fill="#3b4c80"/><path d="M3.800 6.300h8.400" stroke="#5a70b8" stroke-width=".8"/></svg><div style="left:175px;top:224px;width:1px;height:23px;background:#a5c8f7"></div><div style="left:176px;top:224px;width:1px;height:23px;background:#f4f9ff"></div><svg style="left:187px;top:231px" width="11" height="9" viewBox="0 0 11 9"><path d="M5 1 L1.500 4.500 L5 8 M9.500 1 L6 4.500 L9.500 8" fill="none" stroke="#3b5a92" stroke-width="1.600"/></svg><div style="left:4px;top:341px;width:204px;height:30px;background:#dfdfdf"></div><svg style="left:16px;top:255px" width="21" height="20" viewBox="0 0 21 20"><g transform="translate(6,0)"><rect x="0" y="0" width="14" height="14" fill="#1f3550"/><rect x=".6" y="0" width="12.400" height="12.300" fill="#fff"/><rect x="0" y="0" width="14" height="4.200" fill="url(#qh)"/><rect x="1" y="1" width="12" height="1" fill="#8fcfc6" opacity=".8"/><path d="M2 6.500h3M9 6.500h2.500M2 11h3M9 11h2.500" stroke="#7b8aa5" stroke-width="1"/><rect x="2" y="8" width="3" height="2" fill="#a9b4c8"/></g><g transform="translate(0,5)"><rect x="0" y="0" width="14" height="14" fill="#1f3550"/><rect x=".6" y="0" width="12.400" height="12.300" fill="#fff"/><rect x="0" y="0" width="14" height="4.200" fill="url(#qh)"/><rect x="1" y="1" width="12" height="1" fill="#8fcfc6" opacity=".8"/><path d="M2 6.500h3M9 6.500h2.500M2 11h3M9 11h2.500" stroke="#7b8aa5" stroke-width="1"/><rect x="2" y="8" width="3" height="2" fill="#a9b4c8"/></g></svg><span class="t" style="left:50px;top:258px;font-size:12.5px;color:#1e1e1e;line-height:17px;letter-spacing:0.13px;">должность</span><svg style="left:16px;top:285px" width="21" height="20" viewBox="0 0 21 20"><g transform="translate(6,0)"><rect x="0" y="0" width="14" height="14" fill="#1f3550"/><rect x=".6" y="0" width="12.400" height="12.300" fill="#fff"/><rect x="0" y="0" width="14" height="4.200" fill="url(#qh)"/><rect x="1" y="1" width="12" height="1" fill="#8fcfc6" opacity=".8"/><path d="M2 6.500h3M9 6.500h2.500M2 11h3M9 11h2.500" stroke="#7b8aa5" stroke-width="1"/><rect x="2" y="8" width="3" height="2" fill="#a9b4c8"/></g><g transform="translate(0,5)"><rect x="0" y="0" width="14" height="14" fill="#1f3550"/><rect x=".6" y="0" width="12.400" height="12.300" fill="#fff"/><rect x="0" y="0" width="14" height="4.200" fill="url(#qh)"/><rect x="1" y="1" width="12" height="1" fill="#8fcfc6" opacity=".8"/><path d="M2 6.500h3M9 6.500h2.500M2 11h3M9 11h2.500" stroke="#7b8aa5" stroke-width="1"/><rect x="2" y="8" width="3" height="2" fill="#a9b4c8"/></g></svg><span class="t" style="left:50px;top:288px;font-size:12.5px;color:#1e1e1e;line-height:17px;letter-spacing:0.37px;">Запрос по двоечникам</span><svg style="left:16px;top:315px" width="21" height="20" viewBox="0 0 21 20"><g transform="translate(6,0)"><rect x="0" y="0" width="14" height="14" fill="#1f3550"/><rect x=".6" y="0" width="12.400" height="12.300" fill="#fff"/><rect x="0" y="0" width="14" height="4.200" fill="url(#qh)"/><rect x="1" y="1" width="12" height="1" fill="#8fcfc6" opacity=".8"/><path d="M2 6.500h3M9 6.500h2.500M2 11h3M9 11h2.500" stroke="#7b8aa5" stroke-width="1"/><rect x="2" y="8" width="3" height="2" fill="#a9b4c8"/></g><g transform="translate(0,5)"><rect x="0" y="0" width="14" height="14" fill="#1f3550"/><rect x=".6" y="0" width="12.400" height="12.300" fill="#fff"/><rect x="0" y="0" width="14" height="4.200" fill="url(#qh)"/><rect x="1" y="1" width="12" height="1" fill="#8fcfc6" opacity=".8"/><path d="M2 6.500h3M9 6.500h2.500M2 11h3M9 11h2.500" stroke="#7b8aa5" stroke-width="1"/><rect x="2" y="8" width="3" height="2" fill="#a9b4c8"/></g></svg><span class="t" style="left:50px;top:318px;font-size:12.5px;color:#1e1e1e;line-height:17px;letter-spacing:0.31px;">Запрос по отличникам</span><svg style="left:16px;top:345px" width="21" height="20" viewBox="0 0 21 20"><g transform="translate(6,0)"><rect x="0" y="0" width="14" height="14" fill="#1f3550"/><rect x=".6" y="0" width="12.400" height="12.300" fill="#fff"/><rect x="0" y="0" width="14" height="4.200" fill="url(#qh)"/><rect x="1" y="1" width="12" height="1" fill="#8fcfc6" opacity=".8"/><path d="M2 6.500h3M9 6.500h2.500M2 11h3M9 11h2.500" stroke="#7b8aa5" stroke-width="1"/><rect x="2" y="8" width="3" height="2" fill="#a9b4c8"/></g><g transform="translate(0,5)"><rect x="0" y="0" width="14" height="14" fill="#1f3550"/><rect x=".6" y="0" width="12.400" height="12.300" fill="#fff"/><rect x="0" y="0" width="14" height="4.200" fill="url(#qh)"/><rect x="1" y="1" width="12" height="1" fill="#8fcfc6" opacity=".8"/><path d="M2 6.500h3M9 6.500h2.500M2 11h3M9 11h2.500" stroke="#7b8aa5" stroke-width="1"/><rect x="2" y="8" width="3" height="2" fill="#a9b4c8"/></g></svg><span class="t" style="left:50px;top:348px;font-size:12.5px;color:#1e1e1e;line-height:17px;letter-spacing:0.15px;">Запрос по специальнос...</span><div style="left:209px;top:220px;width:6px;height:524px;background:linear-gradient(90deg,#aed0fa 0,#aed0fa 4px,#f2f7fe 4px,#f2f7fe 5px,#5d8bd0 5px);border-top:1px solid #5d8bd0"></div><div style="left:215px;top:220px;width:1065px;height:524px;background:#fff"></div><div style="left:215px;top:220px;width:1063px;height:522px;background:linear-gradient(#7fa1d1,#537db1 68%,#648ec9);border-top:2px solid #8e8e8e;border-left:2px solid #8e8e8e"></div><div style="left:235px;top:262px;width:797px;height:319px;background:#cfdff5;border:1px solid #34527f;border-radius:6px 6px 1px 1px;box-shadow:1px 1px 0 rgba(40,60,100,.5)"></div><div style="left:236px;top:263px;width:795px;height:29px;border-radius:6px 6px 0 0;background:linear-gradient(#eaf1fc 0,#dfeafa 8px,#cfe0f7 9px,#e3eefc 100%);border-bottom:1px solid #b3d3f7;border-top:1px solid #f4f8fd"></div><svg style="left:242px;top:268px" width="21" height="20" viewBox="0 0 21 20"><g transform="translate(6,0)"><rect x="0" y="0" width="14" height="14" fill="#1f3550"/><rect x=".6" y="0" width="12.400" height="12.300" fill="#fff"/><rect x="0" y="0" width="14" height="4.200" fill="url(#qh)"/><rect x="1" y="1" width="12" height="1" fill="#8fcfc6" opacity=".8"/><path d="M2 6.500h3M9 6.500h2.500M2 11h3M9 11h2.500" stroke="#7b8aa5" stroke-width="1"/><rect x="2" y="8" width="3" height="2" fill="#a9b4c8"/></g><g transform="translate(0,5)"><rect x="0" y="0" width="14" height="14" fill="#1f3550"/><rect x=".6" y="0" width="12.400" height="12.300" fill="#fff"/><rect x="0" y="0" width="14" height="4.200" fill="url(#qh)"/><rect x="1" y="1" width="12" height="1" fill="#8fcfc6" opacity=".8"/><path d="M2 6.500h3M9 6.500h2.500M2 11h3M9 11h2.500" stroke="#7b8aa5" stroke-width="1"/><rect x="2" y="8" width="3" height="2" fill="#a9b4c8"/></g></svg><span class="t" style="left:266px;top:271px;font-size:13.5px;color:#76849b;line-height:17px;letter-spacing:0.03px;">Запрос по специальности</span><div style="left:959px;top:281px;width:7px;height:2px;background:#5f6b80;box-shadow:0 1px 0 #f4f8fd"></div><svg style="left:984px;top:275px" width="10" height="9" viewBox="0 0 10 9"><rect x="1" y="1.500" width="8" height="6" fill="#f2f6fc" stroke="#7a8fb8" stroke-width="1"/><rect x=".5" y="1" width="9" height="2.500" fill="#5f6b80"/></svg><svg style="left:1010px;top:275px" width="10" height="10" viewBox="0 0 10 10"><path d="M1 1.800 L9 9.200 M9 1.800 L1 9.200" stroke="#f4f8fd" stroke-width="2.200"/><path d="M1 .8 L9 8.200 M9 .8 L1 8.200" stroke="#6d84ad" stroke-width="2.200"/></svg><div style="left:239px;top:292px;width:789px;height:263px;background:#fff"></div><div style="left:1028px;top:292px;width:2px;height:286px;background:linear-gradient(90deg,#a9c4ea,#7f9fd0)"></div><div style="left:239px;top:292px;width:789px;height:25px;background:#f6f7fc;border-bottom:1px solid #eceef4;border-top:1px solid #e4edf9"></div><div style="left:239px;top:293px;width:24px;height:24px;background:#a9c4e9;border-right:2px solid #a9cbf8;border-bottom:2px solid #a9cbf8;border-left:1px solid #c9dcf5;border-top:1px solid #c9dcf5"></div><div style="left:263px;top:293px;width:179px;height:24px;background:linear-gradient(#f9d9a0,#f5c470 60%,#f2b858);border-right:1px solid #e3e8f2"></div><div style="left:442px;top:293px;width:156px;height:24px;background:linear-gradient(#f2f4fa,#e1e6f1 70%,#d9dfec);border-right:1px solid #c9d1e0"></div><span class="t" style="left:267.5px;top:295.5px;font-size:14px;color:#262626;line-height:19px;letter-spacing:0.53px;transform:scaleX(1.1124);transform-origin:0 0;">Код специальности</span><span class="t" style="left:444.8px;top:295.5px;font-size:14px;color:#262626;line-height:19px;letter-spacing:0.55px;transform:scaleX(1.1179);transform-origin:0 0;">Код абитуриента</span><div style="left:239px;top:389px;width:24px;height:166px;background:#f7f8fd"></div><div style="left:239px;top:317px;width:24px;height:23px;background:#fdd58e;border-right:1px solid #fbe3b8"></div><div style="left:239px;top:340px;width:24px;height:25px;background:#e3eaf6;border-top:1px solid #fff;border-right:1px solid #9db6d8;border-bottom:1px solid #9db6d8"></div><div style="left:239px;top:365px;width:24px;height:24px;background:#e3eaf6;border-right:1px solid #9db6d8;border-bottom:1px solid #c5d3e8"></div><div style="left:262px;top:316px;width:180px;height:26px;background:#fff;border:1px solid #f6b24e;border-width:1px 1px 2px 1px"></div><div style="left:442px;top:317px;width:156px;height:23px;background:#e9ecf6"></div><div style="left:263px;top:341px;width:335px;height:23px;background:#f3f3f3"></div><div style="left:441px;top:341px;width:1px;height:48px;background:#d4dbe8"></div><div style="left:597px;top:341px;width:1px;height:48px;background:#d4dbe8"></div><div style="left:715px;top:292px;width:1px;height:263px;background:#edeff4"></div><div style="left:833px;top:292px;width:1px;height:263px;background:#edeff4"></div><div style="left:951px;top:292px;width:1px;height:263px;background:#edeff4"></div><div style="left:262px;top:389px;width:1px;height:166px;background:#edeff4"></div><div style="left:441px;top:389px;width:1px;height:166px;background:#edeff4"></div><div style="left:597px;top:389px;width:1px;height:166px;background:#edeff4"></div><div style="left:263px;top:340px;width:335px;height:1px;background:#d4dbe8"></div><div style="left:598px;top:340px;width:430px;height:1px;background:#edeff4"></div><div style="left:263px;top:364px;width:335px;height:1px;background:#d4dbe8"></div><div style="left:598px;top:364px;width:430px;height:1px;background:#edeff4"></div><div style="left:263px;top:388px;width:335px;height:1px;background:#d4dbe8"></div><div style="left:598px;top:388px;width:430px;height:1px;background:#edeff4"></div><div style="left:239px;top:412px;width:789px;height:1px;background:#edeff4"></div><div style="left:239px;top:436px;width:789px;height:1px;background:#edeff4"></div><div style="left:239px;top:460px;width:789px;height:1px;background:#edeff4"></div><div style="left:239px;top:484px;width:789px;height:1px;background:#edeff4"></div><div style="left:239px;top:508px;width:789px;height:1px;background:#edeff4"></div><div style="left:239px;top:532px;width:789px;height:1px;background:#edeff4"></div><div style="left:263px;top:340px;width:179px;height:1px;background:#f6b24e"></div><div style="left:431px;top:318px;width:9px;height:21px;background:#000"></div><span class="t" style="left:431.6px;top:320px;font-size:15px;color:#fff;line-height:19px;">2</span><span class="t" style="left:587.3px;top:320px;font-size:15px;color:#1e1e1e;line-height:19px;">3</span><span class="t" style="left:431.6px;top:344px;font-size:15px;color:#1e1e1e;line-height:19px;">2</span><span class="t" style="left:587.3px;top:344px;font-size:15px;color:#1e1e1e;line-height:19px;">4</span><span class="t" style="left:412.5px;top:368px;font-size:15px;color:#1e1e1e;line-height:19px;letter-spacing:0.7px;">(№)</span><span class="t" style="left:568.5px;top:368px;font-size:15px;color:#1e1e1e;line-height:19px;letter-spacing:0.7px;">(№)</span><svg style="left:245px;top:371px" width="11" height="11" viewBox="0 0 11 11"><path d="M5.500 .5v10M.5 5.500h10M1.800 1.800l7.400 7.400M9.200 1.800l-7.400 7.400" stroke="#222" stroke-width="1.100"/></svg><div style="left:239px;top:555px;width:789px;height:23px;background:linear-gradient(#eaf2fd 0,#e8f0fd 10px,#d6e6fb 11px,#d9e8fc 100%);border-top:1px solid #7f9fd0;border-bottom:1px solid #9db9e4"></div><span class="t" style="left:244.5px;top:559px;font-size:12.5px;color:#15428b;line-height:17px;letter-spacing:-0.2px;">Запись:</span><svg style="left:296px;top:561px" width="9" height="10" viewBox="0 0 9 10"><path d="M7 1 l-4 4 4 4z" fill="#1f3f7f"/><rect x="1" y="1" width="1.500" height="8" fill="#1f3f7f"/></svg><svg style="left:318px;top:561px" width="9" height="10" viewBox="0 0 9 10"><path d="M5 1 l-4 4 4 4z" fill="#a9b8d2"/></svg><div style="left:331px;top:557px;width:62px;height:20px;background:#eef4fd;border:1px solid #b5c7e3"></div><span class="t" style="left:333.5px;top:559px;font-size:12.5px;color:#111;line-height:17px;letter-spacing:0.18px;">1 из 2</span><svg style="left:404px;top:561px" width="9" height="10" viewBox="0 0 9 10"><path d="M0 1 l4 4 -4 4z" fill="#1f3f7f"/></svg><svg style="left:424px;top:561px" width="9" height="10" viewBox="0 0 9 10"><path d="M0 1 l4 4 -4 4z" fill="#1f3f7f"/><rect x="5.500" y="1" width="1.500" height="8" fill="#1f3f7f"/></svg><svg style="left:441px;top:560px" width="15" height="12" viewBox="0 0 15 12"><path d="M0 2l4 4-4 4z" fill="#1f3f7f"/><path d="M10 1v9M5.500 5.500h9M6.800 2.300l6.400 6.400M13.200 2.300l-6.400 6.400" stroke="#f0c020" stroke-width="1.500"/></svg><div style="left:462px;top:556px;width:1px;height:22px;background:#8fb0de"></div><svg style="left:488px;top:559px" width="15" height="14" viewBox="0 0 15 14" opacity=".7"><path d="M1 1.500h9L6.500 6v5.500h-2V6z" fill="#d5d9e0" stroke="#9199a8" stroke-width=".9"/><path d="M7 6l6 6.500M13 6L7 12.500" stroke="#8d95a5" stroke-width="1.500"/></svg><span class="t" style="left:508.3px;top:559px;font-size:12.5px;color:#a3a3a3;line-height:17px;letter-spacing:-0.05px;">Нет фильтра</span><div style="left:606px;top:556px;width:1px;height:22px;background:#8fb0de"></div><div style="left:612px;top:557px;width:87px;height:20px;background:#eef4fd;border:1px solid #b5c7e3"></div><span class="t" style="left:614.5px;top:559px;font-size:12.5px;color:#111;line-height:17px;letter-spacing:0.46px;">Поиск</span><div style="left:0;top:744px;width:1280px;height:27px;background:linear-gradient(#5d8bd0 0,#5d8bd0 1px,#fff 1px,#fff 2px,#d7e5f8 2px,#c9dcf6 9px,#b3cff3 10px,#c6daf5 18px,#d9e6f7 26px,#dce8f8 27px)"></div><span class="t" style="left:8.5px;top:751px;font-size:12.5px;color:#17306f;line-height:17px;letter-spacing:0.08px;">Режим таблицы</span><div style="left:1159px;top:746px;width:1px;height:24px;background:#8fb0de"></div><div style="left:1160px;top:746px;width:1px;height:24px;background:#eef4fd"></div><div style="left:1166px;top:747px;width:114px;height:23px;border:1px solid #86a9dc;border-radius:3px;background:linear-gradient(#dce8f8,#c5d8f2 50%,#b9d0ef 51%,#cfe0f6)"></div><div style="left:1167px;top:748px;width:22px;height:21px;background:linear-gradient(#fbdca0,#f9c567 50%,#f6b74a 51%,#fbe09a);border-right:1px solid #c9a25a"></div><div style="left:1211px;top:748px;width:1px;height:21px;background:#9db9e2"></div><div style="left:1233px;top:748px;width:1px;height:21px;background:#9db9e2"></div><div style="left:1256px;top:748px;width:1px;height:21px;background:#9db9e2"></div><svg style="left:1171px;top:751px" width="14" height="13" viewBox="0 0 14 13"><rect x=".8" y=".8" width="12.400" height="11.400" fill="#fff" stroke="#3a3a3a" stroke-width="1.500"/><rect x="1" y="1" width="12" height="3" fill="#3a3a3a"/><path d="M3 6.500h3M7.500 6.500h4M3 9.500h3M7.500 9.500h4" stroke="#555" stroke-width="1.500"/></svg><svg style="left:1193px;top:751px" width="15" height="14" viewBox="0 0 15 14"><path d="M1 4.500h10v8h-10zM4.500 1h4v3.500M1 8.500h10M4.500 4.500v8M8 4.500v8" fill="#e8e8e8" stroke="#555" stroke-width="1.400"/><path d="M11 6l3 2.500-3 2.500z" fill="#555"/></svg><svg style="left:1215px;top:751px" width="15" height="14" viewBox="0 0 15 14"><path d="M1 12.500h13M2.500 12v-6h2.500v6M6 12V2h3v10M10 12V5h2v7" fill="#e8e8e8" stroke="#555" stroke-width="1.300"/></svg><span class="t" style="left:1235px;top:751.5px;font-size:9px;color:#333;line-height:13px;letter-spacing:-1.01px;font-weight:bold;-webkit-text-stroke:.35px #333;">SQL</span><svg style="left:1259px;top:751px" width="15" height="14" viewBox="0 0 15 14"><path d="M1 1l6 6M13.500 1L4 10.500" stroke="#555" stroke-width="1.800"/><path d="M1 12h13" stroke="#555" stroke-width="2.500"/><path d="M7 11.500L11 7v4.500z" fill="#555"/></svg><div style="left:0;top:771px;width:1280px;height:4px;background:linear-gradient(#2a4db0 0,#2a4db0 1px,#89bdf0 1px,#89bdf0 2px,#84b4ec 2px)"></div><div style="left:0;top:773px;width:44px;height:2px;background:#7fc0ec"></div><div style="left:45px;top:773px;width:157px;height:2px;background:#90b4e9;border-top:1px solid #7b94c6;border-radius:2px 2px 0 0"></div><div style="left:205px;top:773px;width:157px;height:2px;background:#90b4e9;border-top:1px solid #7b94c6;border-radius:2px 2px 0 0"></div><div style="left:365px;top:773px;width:157px;height:2px;background:#90b4e9;border-top:1px solid #7b94c6;border-radius:2px 2px 0 0"></div><div style="left:525px;top:773px;width:157px;height:2px;background:#90b4e9;border-top:1px solid #7b94c6;border-radius:2px 2px 0 0"></div><div style="left:685px;top:773px;width:157px;height:2px;background:#90b4e9;border-top:1px solid #7b94c6;border-radius:2px 2px 0 0"></div><div style="left:845px;top:772px;width:157px;height:3px;background:#1c2f68;border-radius:2px 2px 0 0"></div><div style="left:1005px;top:773px;width:275px;height:2px;background:#86b8ee"></div><svg style="left:3px;top:2px" width="50" height="52" viewBox="0 0 50 52">
<defs><radialGradient id="ob" cx=".5" cy=".25" r=".8"><stop offset="0" stop-color="#ffffff"/><stop offset=".5" stop-color="#eef2f8"/><stop offset="1" stop-color="#c2cee0"/></radialGradient>
<linearGradient id="oe" x1="0" y1="0" x2="1" y2="0"><stop offset="0" stop-color="#8fa3c4"/><stop offset=".3" stop-color="#dfe6f1" stop-opacity=".2"/><stop offset=".7" stop-color="#dfe6f1" stop-opacity=".2"/><stop offset="1" stop-color="#8fa3c4"/></linearGradient>
<linearGradient id="o1" x1="0" y1="0" x2="1" y2="1"><stop offset="0" stop-color="#d8421a"/><stop offset="1" stop-color="#f08a1c"/></linearGradient>
<linearGradient id="o3" x1="0" y1="0" x2="0" y2="1"><stop offset="0" stop-color="#f6c51c"/><stop offset="1" stop-color="#f0a010"/></linearGradient></defs>
<circle cx="25" cy="26.500" r="23.200" fill="rgba(100,125,165,.3)"/>
<circle cx="25" cy="25.500" r="22" fill="url(#ob)" stroke="#8d9db8" stroke-width="1"/>
<circle cx="25" cy="25.500" r="20.500" fill="none" stroke="#fff" stroke-width="1.600"/>
<path d="M5.300 24 h39.400 a19.700 19.700 0 0 1 -2 8 h-35.400 a19.700 19.700 0 0 1 -2 -8z" fill="url(#oe)" opacity=".8"/>
<rect x="11.500" y="11.500" width="14" height="14" rx="2" fill="url(#o1)"/><rect x="26" y="17" width="10.500" height="10" rx="2" fill="#2a9be8"/>
<rect x="13.500" y="27" width="12" height="13" rx="1.500" fill="url(#o3)"/><rect x="27" y="27.500" width="11" height="11" rx="2" fill="#4aa532"/>
<rect x="17" y="30" width="6" height="7" fill="#fff"/><rect x="30" y="30.500" width="5" height="5" fill="#fff"/>
</svg><svg style="left:66px;top:8px" width="15" height="14" viewBox="0 0 15 14"><rect x=".5" y=".5" width="14" height="13" rx="1" fill="#7468dc" stroke="#4a40b0"/><rect x="3" y="1" width="9" height="6" fill="#fff"/><rect x="11" y="1.500" width="1.500" height="4" fill="#2f2a8a"/></svg><svg style="left:93px;top:9px;opacity:.55" width="14" height="12" viewBox="0 0 14 12"><path d="M2 2v5h5" fill="none" stroke="#7f95bd" stroke-width="2"/><path d="M3 7 Q6 1 11 3 Q13 6 10 11" fill="none" stroke="#7f95bd" stroke-width="2"/></svg><svg style="left:114.5px;top:14.0px" width="5" height="3" viewBox="0 0 5 3"><path d="M0 0h5 l-2.5 3 z" fill="#b7bfcc"/></svg><svg style="left:130px;top:9px;opacity:.55" width="14" height="12" viewBox="0 0 14 12"><path d="M12 2v5h-5" fill="none" stroke="#7f95bd" stroke-width="2"/><path d="M11 7 Q8 1 3 3 Q1 6 4 11" fill="none" stroke="#7f95bd" stroke-width="2"/></svg><svg style="left:151.0px;top:14.0px" width="5" height="3" viewBox="0 0 5 3"><path d="M0 0h5 l-2.5 3 z" fill="#b7bfcc"/></svg><svg style="left:176px;top:11px" width="8" height="8" viewBox="0 0 8 8"><rect x="1" y="0" width="6" height="1.500" fill="#2a4a8a"/><path d="M.5 3.500h7L4 7.500z" fill="#2a4a8a"/></svg><div class="kt" style="left:18px;top:17px">Ф</div><div class="kt" style="left:63px;top:15px">1</div><div class="kt dis" style="left:95px;top:15px">2</div><div class="kt dis" style="left:132px;top:15px">3</div><div class="kt" style="left:86px;top:52px">Г</div><div class="kt" style="left:167px;top:52px">С</div><div class="kt" style="left:275px;top:52px">Ш</div><div class="kt" style="left:428px;top:52px">Б</div></body></html>
